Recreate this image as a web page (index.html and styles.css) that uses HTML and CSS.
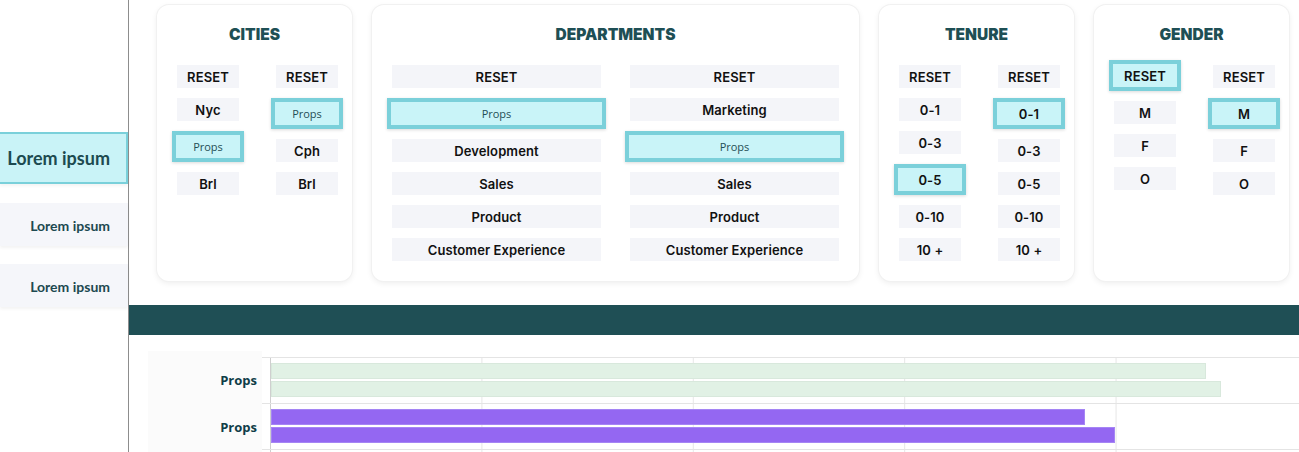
FILE: index.html
```html
<!DOCTYPE html>
<html lang="en">
<head>
<meta charset="utf-8">
<title>Filters</title>
<link rel="stylesheet" href="styles.css">
</head>
<body>
<div class="app">
  <aside class="sidebar">
    <div class="nav-item active">Lorem ipsum</div>
    <div class="nav-item">Lorem ipsum</div>
    <div class="nav-item">Lorem ipsum</div>
  </aside>
  <main class="main">
    <section class="filters">
      <div class="card card-sm">
        <h2 class="card-title">CITIES</h2>
        <div class="cols">
          <div class="col">
            <div class="chip">RESET</div>
            <div class="chip">Nyc</div>
            <div class="chip sel"><span class="prop">Props</span></div>
            <div class="chip">Brl</div>
          </div>
          <div class="col">
            <div class="chip">RESET</div>
            <div class="chip sel"><span class="prop">Props</span></div>
            <div class="chip">Cph</div>
            <div class="chip">Brl</div>
          </div>
        </div>
      </div>
      <div class="card card-lg">
        <h2 class="card-title">DEPARTMENTS</h2>
        <div class="cols">
          <div class="col">
            <div class="chip">RESET</div>
            <div class="chip sel"><span class="prop">Props</span></div>
            <div class="chip">Development</div>
            <div class="chip">Sales</div>
            <div class="chip">Product</div>
            <div class="chip">Customer Experience</div>
          </div>
          <div class="col">
            <div class="chip">RESET</div>
            <div class="chip">Marketing</div>
            <div class="chip sel"><span class="prop">Props</span></div>
            <div class="chip">Sales</div>
            <div class="chip">Product</div>
            <div class="chip">Customer Experience</div>
          </div>
        </div>
      </div>
      <div class="card card-sm">
        <h2 class="card-title">TENURE</h2>
        <div class="cols">
          <div class="col">
            <div class="chip">RESET</div>
            <div class="chip">0-1</div>
            <div class="chip">0-3</div>
            <div class="chip sel">0-5</div>
            <div class="chip">0-10</div>
            <div class="chip">10 +</div>
          </div>
          <div class="col">
            <div class="chip">RESET</div>
            <div class="chip sel">0-1</div>
            <div class="chip">0-3</div>
            <div class="chip">0-5</div>
            <div class="chip">0-10</div>
            <div class="chip">10 +</div>
          </div>
        </div>
      </div>
      <div class="card card-sm">
        <h2 class="card-title">GENDER</h2>
        <div class="cols">
          <div class="col">
            <div class="chip sel lead">RESET</div>
            <div class="chip">M</div>
            <div class="chip">F</div>
            <div class="chip">O</div>
          </div>
          <div class="col">
            <div class="chip">RESET</div>
            <div class="chip sel">M</div>
            <div class="chip">F</div>
            <div class="chip">O</div>
          </div>
        </div>
      </div>
    </section>
    <div class="band"></div>
    <section class="chart">
      <div class="row">
        <div class="label">Props</div>
        <div class="plot">
          <div class="bars">
            <div class="bar green" style="width:935px"></div>
            <div class="bar green" style="width:950px"></div>
          </div>
        </div>
      </div>
      <div class="row last">
        <div class="label">Props</div>
        <div class="plot">
          <div class="bars">
            <div class="bar purple" style="width:814px"></div>
            <div class="bar purple" style="width:844px"></div>
          </div>
        </div>
      </div>
      <div class="tail"><div class="tail-axis"></div></div>
    </section>
  </main>
</div>
</body>
</html>
```

FILE: styles.css
```css
* { box-sizing: border-box; }

body {
  margin: 0;
  width: 1299px;
  height: 452px;
  overflow: hidden;
  background: #ffffff;
  font-family: "Inter", "Open Sans", sans-serif;
}

.app {
  display: flex;
  height: 452px;
}

/* ---------- sidebar ---------- */
.sidebar {
  width: 129px;
  flex: none;
  border-right: 1px solid #8d8d8d;
  padding-top: 132px;
  display: flex;
  flex-direction: column;
}

.nav-item {
  flex: none;
  height: 43px;
  margin-bottom: 18px;
  background: #f5f6fa;
  display: flex;
  align-items: center;
  justify-content: flex-end;
  padding: 2px 18px 0 0;
  font-family: "Lato", "Open Sans", sans-serif;
  font-weight: 700;
  font-size: 14px;
  color: #1d4950;
  white-space: nowrap;
  box-shadow: 0 2px 3px rgba(0, 0, 0, 0.05);
}

.nav-item.active {
  height: 52px;
  margin-bottom: 19px;
  background: #c9f3f7;
  border: 2px solid #7ad0da;
  border-left: none;
  padding: 0 16px 0 0;
  font-size: 18px;
  font-weight: 700;
  color: #1c4a50;
}

/* ---------- main ---------- */
.main {
  flex: 1;
  min-width: 0;
  display: flex;
  flex-direction: column;
}

.main > * { flex: none; }

.filters {
  display: flex;
  gap: 20px;
  padding: 5px 0 0 28px;
}

.card {
  height: 276px;
  flex: none;
  background: #ffffff;
  border-radius: 12px;
  box-shadow: 0 0 0 1px #f1f1f1, 0 2px 6px rgba(0, 0, 0, 0.08);
  padding-top: 20px;
}

.card-sm { width: 195px; }
.card-lg { width: 487px; }

.card-title {
  margin: 0;
  text-align: center;
  font-family: "Inter", sans-serif;
  font-weight: 900;
  font-size: 15.5px;
  line-height: 20px;
  color: #1e4f55;
}

.cols {
  display: flex;
  gap: 37px;
  margin-top: 20px;
  padding-left: 20px;
}

.card-lg .cols { gap: 29px; }

.col {
  width: 62px;
  display: flex;
  flex-direction: column;
  gap: 10px;
}

.card-lg .col { width: 209px; }

.chip {
  flex: none;
  height: 23px;
  background: #f4f5f9;
  display: flex;
  align-items: center;
  justify-content: center;
  font-family: "Inter", sans-serif;
  font-weight: 600;
  font-size: 13px;
  letter-spacing: 0.1px;
  color: #111111;
  white-space: nowrap;
}

.chip.sel {
  height: 31px;
  margin: 0 -5px;
  background: #c9f4f8;
  border: 4px solid #7bd0da;
  box-shadow: 0 1px 3px rgba(0, 0, 0, 0.15);
}

.chip.sel.lead { margin-top: -5px; }

.prop {
  font-family: "Open Sans", sans-serif;
  font-weight: 500;
  font-size: 11px;
  letter-spacing: 0;
  color: #1f4f55;
}

/* ---------- band ---------- */
.band {
  height: 30px;
  margin-top: 24px;
  background: #1f4f55;
}

/* ---------- chart ---------- */
.chart {
  margin: 16px 0 0 19px;
  padding-top: 6px;
  background: linear-gradient(to right, #fbfbfb 114px, #ffffff 114px);
}

.row {
  display: grid;
  grid-template-columns: 114px 1fr;
  height: 46px;
}

.row.last { height: 47px; }

.label {
  display: flex;
  align-items: center;
  justify-content: flex-end;
  padding-right: 5px;
  font-family: "Open Sans", sans-serif;
  font-weight: 700;
  font-size: 13px;
  color: #0f3d48;
}

.plot {
  border-top: 1px solid #e4e4e4;
  padding-left: 8px;
}

.row.last .plot { border-bottom: 1px solid #e4e4e4; }

.bars {
  height: 100%;
  border-left: 1px solid #cfcfcf;
  padding-top: 5px;
  display: flex;
  flex-direction: column;
  gap: 2px;
  background-image: linear-gradient(to right, #e6e6e6 1px, transparent 1px);
  background-size: 211.4px 100%;
  background-position: 210.4px 0;
  background-repeat: repeat-x;
}

.bar {
  height: 16px;
  flex: none;
}

.bar.green {
  background: #e1f1e5;
  border: 1px solid #d8e8dc;
}

.bar.purple {
  background: #9467f2;
  border: 1px solid #a585f4;
}

.tail {
  height: 10px;
  padding-left: 122px;
}

.tail-axis {
  height: 100%;
  border-left: 1px solid #cfcfcf;
  background-image: linear-gradient(to right, #e6e6e6 1px, transparent 1px);
  background-size: 211.4px 100%;
  background-position: 210.4px 0;
  background-repeat: repeat-x;
}
```
